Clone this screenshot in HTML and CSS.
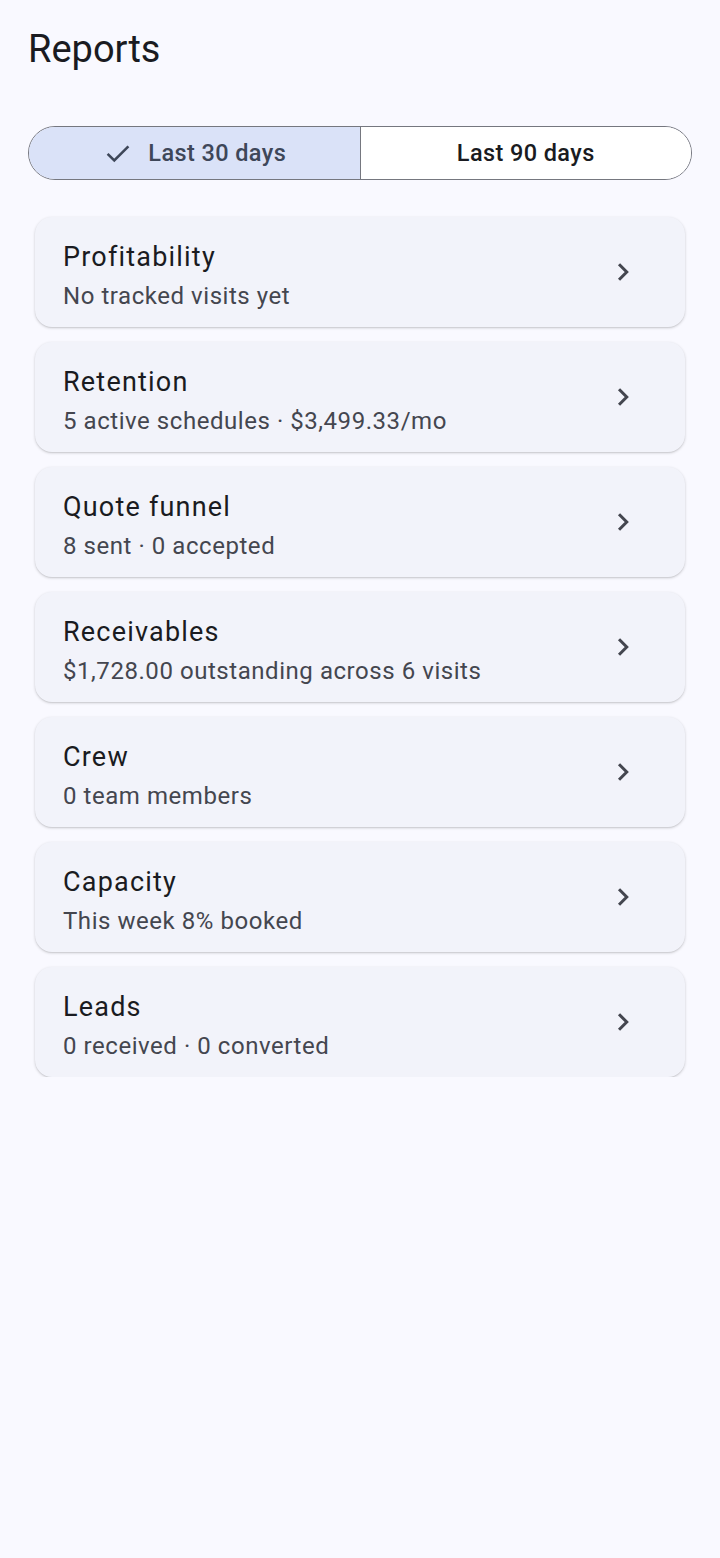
FILE: index.html
```html
<!DOCTYPE html>
<html lang="en">
<head>
    <meta charset="UTF-8">
    <title>Reports</title>
    <link rel="stylesheet" href="styles.css">
</head>
<body>

    <h1 class="page-title">Reports</h1>

    <div class="segmented">
        <button class="segment selected">
            <svg class="check" viewBox="0 0 24 24" width="32" height="32"><path d="M4.2 12.6l5 5L19.8 7" fill="none" stroke="currentColor" stroke-width="1.9"/></svg>
            Last 30 days
        </button>
        <button class="segment">Last 90 days</button>
    </div>

    <div class="report-list">
        <div class="report-card">
            <div class="report-text">
                <div class="report-title">Profitability</div>
                <div class="report-sub">No tracked visits yet</div>
            </div>
            <svg class="chevron" viewBox="0 0 24 24" width="28" height="28"><path d="M8.6 5.4L15.2 12l-6.6 6.6" fill="none" stroke="currentColor" stroke-width="2.6"/></svg>
        </div>
        <div class="report-card">
            <div class="report-text">
                <div class="report-title">Retention</div>
                <div class="report-sub">5 active schedules · $3,499.33/mo</div>
            </div>
            <svg class="chevron" viewBox="0 0 24 24" width="28" height="28"><path d="M8.6 5.4L15.2 12l-6.6 6.6" fill="none" stroke="currentColor" stroke-width="2.6"/></svg>
        </div>
        <div class="report-card">
            <div class="report-text">
                <div class="report-title">Quote funnel</div>
                <div class="report-sub">8 sent · 0 accepted</div>
            </div>
            <svg class="chevron" viewBox="0 0 24 24" width="28" height="28"><path d="M8.6 5.4L15.2 12l-6.6 6.6" fill="none" stroke="currentColor" stroke-width="2.6"/></svg>
        </div>
        <div class="report-card">
            <div class="report-text">
                <div class="report-title">Receivables</div>
                <div class="report-sub">$1,728.00 outstanding across 6 visits</div>
            </div>
            <svg class="chevron" viewBox="0 0 24 24" width="28" height="28"><path d="M8.6 5.4L15.2 12l-6.6 6.6" fill="none" stroke="currentColor" stroke-width="2.6"/></svg>
        </div>
        <div class="report-card">
            <div class="report-text">
                <div class="report-title">Crew</div>
                <div class="report-sub">0 team members</div>
            </div>
            <svg class="chevron" viewBox="0 0 24 24" width="28" height="28"><path d="M8.6 5.4L15.2 12l-6.6 6.6" fill="none" stroke="currentColor" stroke-width="2.6"/></svg>
        </div>
        <div class="report-card">
            <div class="report-text">
                <div class="report-title">Capacity</div>
                <div class="report-sub">This week 8% booked</div>
            </div>
            <svg class="chevron" viewBox="0 0 24 24" width="28" height="28"><path d="M8.6 5.4L15.2 12l-6.6 6.6" fill="none" stroke="currentColor" stroke-width="2.6"/></svg>
        </div>
        <div class="report-card">
            <div class="report-text">
                <div class="report-title">Leads</div>
                <div class="report-sub">0 received · 0 converted</div>
            </div>
            <svg class="chevron" viewBox="0 0 24 24" width="28" height="28"><path d="M8.6 5.4L15.2 12l-6.6 6.6" fill="none" stroke="currentColor" stroke-width="2.6"/></svg>
        </div>
    </div>

</body>
</html>
```

FILE: styles.css
```css
body {
    font-family: Roboto, 'Noto Sans', sans-serif;
    background-color: #f9f9ff;
    color: #1a1b21;
    margin: 0;
    padding: 0 28px;
}

.page-title {
    font-size: 38px;
    font-weight: 400;
    line-height: 44px;
    margin: 27px 0 0;
}

.segmented {
    display: flex;
    margin-top: 55px;
    height: 54px;
    border: 1.5px solid #75777f;
    border-radius: 27px;
    overflow: hidden;
    box-sizing: border-box;
}

.segment {
    flex: 1;
    display: flex;
    align-items: center;
    justify-content: center;
    gap: 14px;
    border: none;
    background: #fff;
    font-family: inherit;
    font-size: 23.5px;
    font-weight: 500;
    color: #1a1b21;
    letter-spacing: 0.4px;
    padding: 0;
}

.segment.selected {
    background: #dae2f8;
    color: #3e4759;
    border-right: 1.5px solid #75777f;
}

.report-list {
    display: flex;
    flex-direction: column;
    gap: 15px;
    margin: 37px 7px 0;
}

.report-card {
    display: flex;
    align-items: center;
    height: 110px;
    padding: 0 48px 0 28px;
    background: #f2f3fa;
    border-radius: 17px;
    box-shadow: 0 1px 3px rgba(0,0,0,0.18), 0 1px 1px rgba(0,0,0,0.06);
    box-sizing: border-box;
}

.report-text {
    flex: 1;
    padding-top: 8px;
}

.report-title {
    font-size: 27px;
    letter-spacing: 1.2px;
    line-height: 32px;
    color: #1a1b21;
}

.report-sub {
    font-size: 24px;
    letter-spacing: 0.55px;
    line-height: 30px;
    margin-top: 8px;
    color: #44464f;
}

.chevron {
    color: #44464f;
}
```
